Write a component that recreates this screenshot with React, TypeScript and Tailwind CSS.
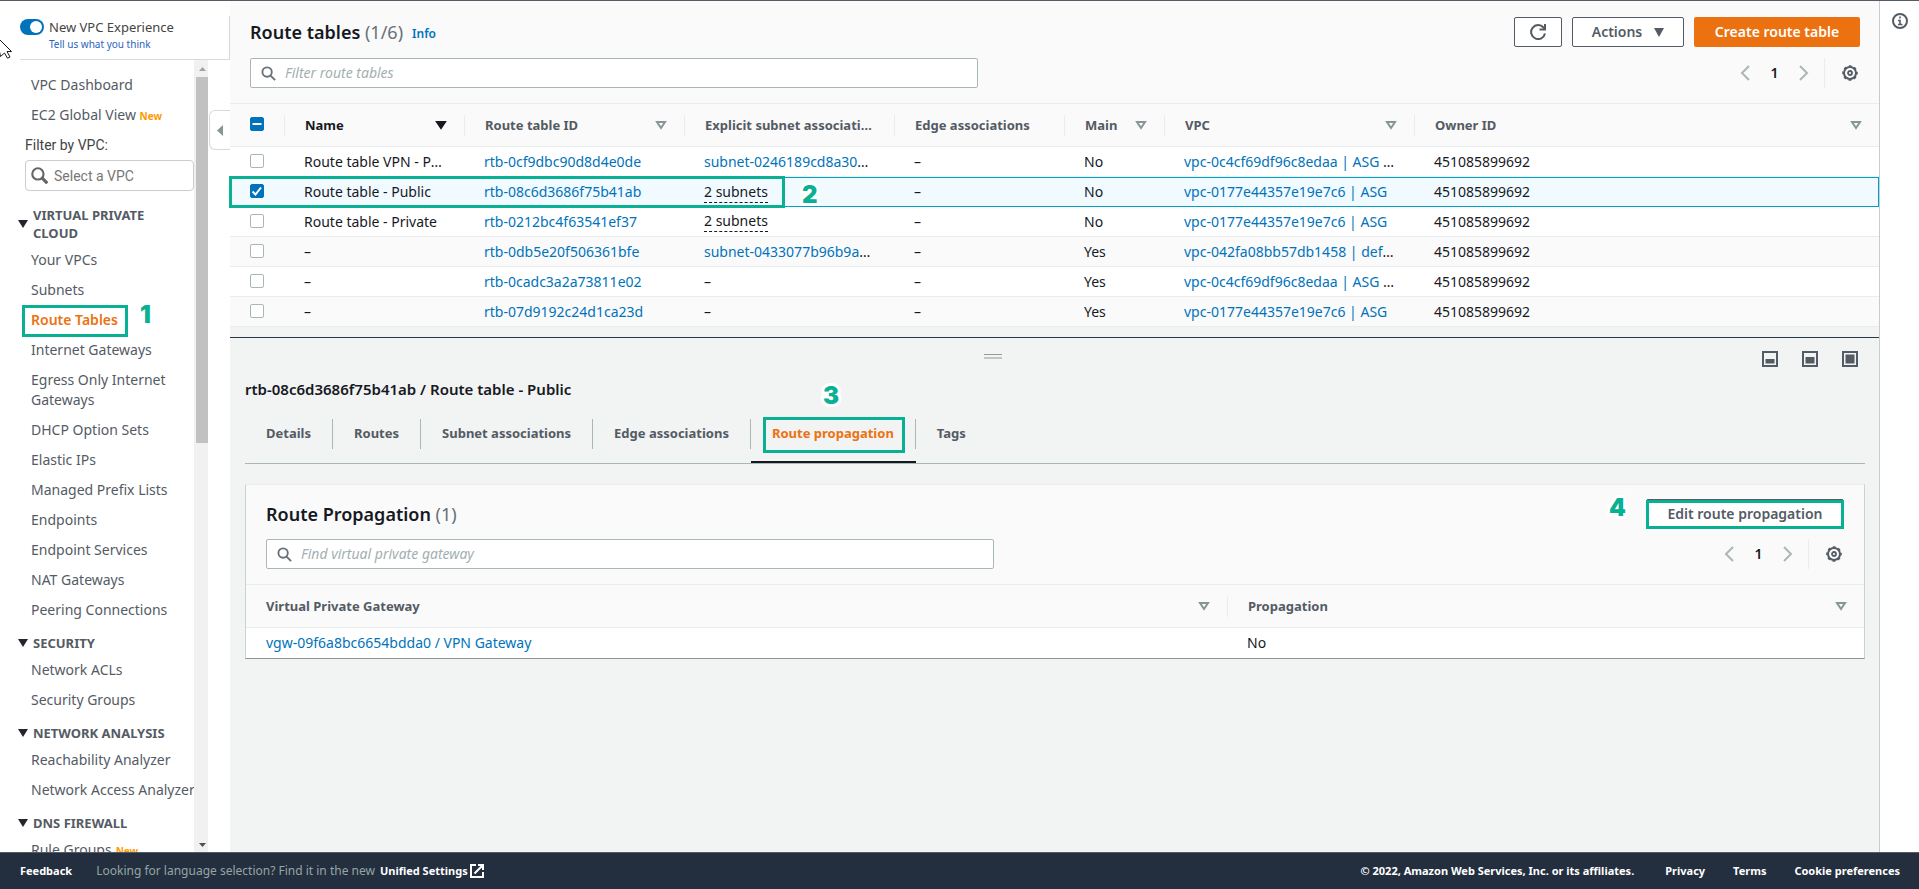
import * as React from "react"

const GREEN_BOX = "pointer-events-none absolute border-3 border-[#09b093]"

interface RouteTable {
    name: string
    id: string
    subnet: string
    main: string
    vpc: string
}

const routeTables: RouteTable[] = [
    { name: "Route table VPN - Private", id: "rtb-0cf9dbc90d8d4e0de", subnet: "subnet-0246189cd8a30b1f2", main: "No", vpc: "vpc-0c4cf69df96c8edaa | ASG VPN" },
    { name: "Route table - Public", id: "rtb-08c6d3686f75b41ab", subnet: "2 subnets", main: "No", vpc: "vpc-0177e44357e19e7c6 | ASG" },
    { name: "Route table - Private", id: "rtb-0212bc4f63541ef37", subnet: "2 subnets", main: "No", vpc: "vpc-0177e44357e19e7c6 | ASG" },
    { name: "–", id: "rtb-0db5e20f506361bfe", subnet: "subnet-0433077b96b9a41c7", main: "Yes", vpc: "vpc-042fa08bb57db1458 | default" },
    { name: "–", id: "rtb-0cadc3a2a73811e02", subnet: "–", main: "Yes", vpc: "vpc-0c4cf69df96c8edaa | ASG VPN" },
    { name: "–", id: "rtb-07d9192c24d1ca23d", subnet: "–", main: "Yes", vpc: "vpc-0177e44357e19e7c6 | ASG" },
]

const sections = [
    {
        title: "VIRTUAL PRIVATE CLOUD",
        items: [
            "Your VPCs",
            "Subnets",
            "Route Tables",
            "Internet Gateways",
            "Egress Only Internet Gateways",
            "DHCP Option Sets",
            "Elastic IPs",
            "Managed Prefix Lists",
            "Endpoints",
            "Endpoint Services",
            "NAT Gateways",
            "Peering Connections",
        ],
    },
    { title: "SECURITY", items: ["Network ACLs", "Security Groups"] },
    { title: "NETWORK ANALYSIS", items: ["Reachability Analyzer", "Network Access Analyzer"] },
    { title: "DNS FIREWALL", items: ["Rule Groups"] },
]

const tabs = ["Details", "Routes", "Subnet associations", "Edge associations", "Route propagation", "Tags"]

function Step({ n, className }: { n: number; className: string }) {
    return (
        <span
            className={`pointer-events-none absolute font-[Inter] text-2xl leading-6 font-black text-[#09b093] [-webkit-text-stroke:6px_white] [paint-order:stroke_fill] ${className}`}
        >
            {n}
        </span>
    )
}

function SearchIcon({ className }: { className: string }) {
    return (
        <svg viewBox="0 0 16 16" className={className} fill="none" stroke="currentColor" strokeWidth="2">
            <circle cx="6.5" cy="6.5" r="5" />
            <path d="M10.2 10.2 15 15" />
        </svg>
    )
}

function SortIcon({ active = false }: { active?: boolean }) {
    return (
        <svg viewBox="0 0 12 10" className={`h-[10px] w-3 shrink-0 ${active ? "text-[#16191f]" : "text-[#879596]"}`}>
            <path
                d="M2 2h8L6 8z"
                fill={active ? "currentColor" : "none"}
                stroke="currentColor"
                strokeWidth="2"
            />
        </svg>
    )
}

function GearIcon() {
    return (
        <svg viewBox="0 0 16 16" className="size-4" fill="none" stroke="#545b64" strokeWidth="2">
            <circle cx="8" cy="8" r="6" />
            <circle cx="8" cy="8" r="7" strokeWidth="1.6" strokeDasharray="2.75 2.75" strokeDashoffset="1.4" />
            <circle cx="8" cy="8" r="2" strokeWidth="1.8" />
        </svg>
    )
}

function Pagination() {
    return (
        <div className="flex h-[30px] items-center">
            <button aria-label="Previous page" className="text-[#aab7b8]">
                <svg viewBox="0 0 10 16" className="h-4 w-[10px]" fill="none" stroke="currentColor" strokeWidth="2">
                    <path d="M9 1 2 8l7 7" />
                </svg>
            </button>
            <span className="w-[49px] text-center text-sm font-semibold">1</span>
            <button aria-label="Next page" className="text-[#aab7b8]">
                <svg viewBox="0 0 10 16" className="h-4 w-[10px]" fill="none" stroke="currentColor" strokeWidth="2">
                    <path d="m1 1 7 7-7 7" />
                </svg>
            </button>
            <span className="mr-[17px] ml-[15px] h-full border-l border-[#eaeded]" />
            <button aria-label="Preferences" className="mr-[2px]">
                <GearIcon />
            </button>
        </div>
    )
}

function SearchBox({ placeholder }: { placeholder: string }) {
    return (
        <label className="flex h-[30px] w-[728px] items-center rounded-[2px] border border-[#aab7b8] bg-white pl-[10px]">
            <SearchIcon className="size-[15px] text-[#687078]" />
            <input
                aria-label={placeholder}
                placeholder={placeholder}
                className="ml-[9px] min-w-0 flex-1 text-sm outline-none placeholder:text-[#a3afb0] placeholder:italic"
            />
        </label>
    )
}

function Checkbox({ label, checked = false, mixed = false }: { label: string; checked?: boolean; mixed?: boolean }) {
    return (
        <span className="relative mb-[2px] block size-[14px]">
            <input
                type="checkbox"
                aria-label={label}
                defaultChecked={checked || mixed}
                className="block size-[14px] appearance-none rounded-[2px] border border-[#aab7b8] bg-white checked:border-[#0073bb] checked:bg-[#0073bb]"
            />
            {(checked || mixed) && (
                <svg viewBox="0 0 14 14" className="pointer-events-none absolute inset-0 size-[14px]" fill="none" stroke="white" strokeWidth="2">
                    <path d={mixed ? "M2.5 7h9" : "m2.5 7.5 3 3 5.5-7"} />
                </svg>
            )}
        </span>
    )
}

function HeaderCell({ label, sort = false, active = false, last = false }: { label: string; sort?: boolean; active?: boolean; last?: boolean }) {
    return (
        <th className="h-[43px] border-b border-[#eaeded] bg-[#fafafa] p-0 text-left">
            <div className={`flex h-[21px] items-center pl-5 ${last ? "" : "border-r border-[#eaeded]"} ${sort ? "pr-[17px]" : "pr-5"}`}>
                <span className={`min-w-0 flex-1 truncate text-[13px] font-bold ${active ? "text-[#16191f]" : "text-[#545b64]"}`}>{label}</span>
                {sort && <SortIcon active={active} />}
            </div>
        </th>
    )
}

function Sidebar() {
    return (
        <aside className="relative flex w-[230px] shrink-0 flex-col text-[#545b64]">
            <div className="mt-[15px] ml-5 flex h-11 border-r border-b border-[#d5dbdb]">
                <label className="relative mt-[3px] h-4 w-6 shrink-0">
                    <input type="checkbox" defaultChecked aria-label="New VPC Experience" className="block h-4 w-6 appearance-none rounded-full bg-[#0073bb]" />
                    <span className="absolute top-[2px] right-[2px] size-3 rounded-full bg-white" />
                </label>
                <div className="ml-[5px]">
                    <div className="mt-[2px] text-[13px] leading-[18px] text-[#444]">New VPC Experience</div>
                    <a href="#feedback" className="block text-[10px] leading-4 text-[#2b62c4]">Tell us what you think</a>
                </div>
            </div>
            <div className="flex min-h-0 flex-1">
                <nav className="flex w-[194px] flex-col overflow-hidden pt-[10px] text-sm leading-5">
                    <a href="#dashboard" className="py-[5px] pl-[31px]">VPC Dashboard</a>
                    <a href="#global" className="py-[5px] pl-[31px] whitespace-nowrap">
                        EC2 Global View <span className="text-[10px] font-bold text-[#ff9900]">New</span>
                    </a>
                    <label htmlFor="vpc-filter" className="py-1 pl-[25px] font-[Roboto] text-[#444]">Filter by VPC:</label>
                    <div className="mt-px ml-[25px] flex h-[31px] shrink-0 items-center rounded-[4px] border border-[#ccc] bg-white pl-[5px] text-[#666]">
                        <svg viewBox="0 0 16 16" className="size-[17px] shrink-0" fill="none" stroke="currentColor">
                            <circle cx="6.5" cy="6.5" r="5.3" strokeWidth="2" />
                            <path d="m10.3 10.3 5 5" strokeWidth="3" />
                        </svg>
                        <input id="vpc-filter" placeholder="Select a VPC" className="ml-[6px] w-full min-w-0 font-[Roboto] text-sm outline-none placeholder:text-[#777]" />
                    </div>
                    <div className="h-[6px] shrink-0" />
                    {sections.map((section) => (
                        <div key={section.title}>
                            <button className="flex w-full items-center pt-[9px] pb-[3px] pl-[18px] text-left text-[13px] leading-[18px] font-bold">
                                <svg viewBox="0 0 10 8" className="mr-[5px] h-2 w-[10px] shrink-0" fill="#21252c">
                                    <path d="M0 0h10L5 8z" />
                                </svg>
                                <span className="w-[150px]">{section.title}</span>
                            </button>
                            {section.items.map((item) => (
                                <a
                                    key={item}
                                    href="#nav"
                                    className={`relative block py-[5px] pl-[31px] ${item.length > 25 ? "" : "whitespace-nowrap"} ${item === "Route Tables" ? "font-semibold text-[#ec7211]" : ""}`}
                                >
                                    {item}
                                    {item === "Rule Groups" && <span className="ml-1 text-[10px] font-bold text-[#ff9900]">New</span>}
                                    {item === "Route Tables" && (
                                        <>
                                            <span className={`${GREEN_BOX} top-0 left-[22px] h-8 w-[106px]`} />
                                            <Step n={1} className="-top-[2px] left-[140px]" />
                                        </>
                                    )}
                                </a>
                            ))}
                        </div>
                    ))}
                </nav>
                <div className="flex w-[14px] flex-col items-end bg-[#f1f1f1]">
                    <svg viewBox="0 0 14 17" className="h-[17px] w-[14px]" fill="#a3a3a3">
                        <path d="M5 11h7L8.5 7z" />
                    </svg>
                    <div className="h-[366px] w-3 bg-[#c1c1c1]" />
                    <svg viewBox="0 0 14 17" className="mt-auto h-[17px] w-[14px]" fill="#505050">
                        <path d="M5 8h7l-3.5 4z" />
                    </svg>
                </div>
            </div>
            <button aria-label="Collapse navigation" className="absolute top-[109px] right-0 flex h-10 w-[21px] items-center justify-center rounded-l-md border border-r-0 border-[#d5dbdb] bg-white">
                <svg viewBox="0 0 6 11" className="h-[11px] w-[6px]" fill="#879596">
                    <path d="M6 0v11L0 5.5z" />
                </svg>
            </button>
            <svg viewBox="0 0 12 20" className="absolute top-[38px] left-0 h-5 w-3" fill="white" stroke="#16191f">
                <path d="M-3.5-2.500 11.500 12.500H7L10 18l-2.500 1.200L4.500 14 .5 17.500z" />
            </svg>
        </aside>
    )
}

function RouteTablesPanel() {
    return (
        <section className="bg-[#fafafa]">
            <div className="pt-4 pr-[19px] pb-[15px] pl-5">
                <div className="flex h-[30px] items-center">
                    <h1 className="text-lg font-semibold">
                        Route tables <span className="font-normal text-[#687078]">(1/6)</span>
                    </h1>
                    <a href="#info" className="mt-1 ml-[9px] text-xs font-semibold text-[#0073bb]">Info</a>
                    <div className="ml-auto flex gap-[10px] text-sm font-semibold text-[#545b64]">
                        <button aria-label="Refresh" className="flex h-[30px] w-12 items-center justify-center rounded-[2px] border border-[#545b64] bg-white">
                            <svg viewBox="0 0 16 16" className="size-4" fill="none" stroke="currentColor" strokeWidth="2">
                                <path d="M15 9.5A7 7 0 1 1 13.5 3.5L15 5.5" />
                                <path d="M15 0v5.5H9.5" />
                            </svg>
                        </button>
                        <button className="flex h-[30px] w-28 items-center justify-center gap-3 rounded-[2px] border border-[#545b64] bg-white">
                            Actions
                            <svg viewBox="0 0 10 9" className="h-[9px] w-[10px]" fill="currentColor">
                                <path d="M0 0h10L5 9z" />
                            </svg>
                        </button>
                        <button className="h-[30px] w-[166px] rounded-[2px] bg-[#ec7211] text-white">Create route table</button>
                    </div>
                </div>
                <div className="mt-[11px] flex justify-between">
                    <SearchBox placeholder="Filter route tables" />
                    <Pagination />
                </div>
            </div>
            <div className="relative border-t border-[#eaeded]">
                <table className="w-full table-fixed border-separate border-spacing-0 text-sm leading-5">
                    <colgroup>
                        <col className="w-[55px]" />
                        <col className="w-[180px]" />
                        <col className="w-[220px]" />
                        <col className="w-[210px]" />
                        <col className="w-[170px]" />
                        <col className="w-[100px]" />
                        <col className="w-[250px]" />
                        <col />
                    </colgroup>
                    <thead>
                        <tr>
                            <th className="border-b border-[#eaeded] p-0">
                                <div className="flex h-[21px] items-center border-r border-[#eaeded] pl-5">
                                    <Checkbox label="Select all" mixed />
                                </div>
                            </th>
                            <HeaderCell label="Name" sort active />
                            <HeaderCell label="Route table ID" sort />
                            <HeaderCell label="Explicit subnet associations" />
                            <HeaderCell label="Edge associations" />
                            <HeaderCell label="Main" sort />
                            <HeaderCell label="VPC" sort />
                            <HeaderCell label="Owner ID" sort last />
                        </tr>
                    </thead>
                    <tbody>
                        {routeTables.map((row, i) => {
                            const selected = i === 1
                            const cell = `h-[30px] truncate py-0 pr-5 ${
                                selected ? "border-y border-[#00a1c9] bg-[#f1faff]" : i > 2 && i % 2 ? "border-b border-[#eaeded]" : "border-b border-[#eaeded] bg-white"
                            }`
                            return (
                                <tr key={row.id}>
                                    <td className={`${cell} pl-5`}>
                                        <Checkbox label={`Select ${row.id}`} checked={selected} />
                                    </td>
                                    <td className={`${cell} pl-[19px]`}>{row.name}</td>
                                    <td className={`${cell} pl-[19px]`}>
                                        <a href="#rtb" className="text-[#0073bb]">{row.id}</a>
                                    </td>
                                    <td className={`${cell} pl-[19px]`}>
                                        {row.subnet.startsWith("subnet") ? (
                                            <a href="#subnet" className="text-[#0073bb]">{row.subnet}</a>
                                        ) : row.subnet === "–" ? (
                                            "–"
                                        ) : (
                                            <button className="border-b border-dashed border-[#16191f]">{row.subnet}</button>
                                        )}
                                    </td>
                                    <td className={`${cell} pl-[19px]`}>–</td>
                                    <td className={`${cell} pl-[19px]`}>{row.main}</td>
                                    <td className={`${cell} pl-[19px]`}>
                                        <a href="#vpc" className="text-[#0073bb]">{row.vpc}</a>
                                    </td>
                                    <td className={`${cell} pl-[19px] ${selected ? "border-r" : ""}`}>451085899692</td>
                                </tr>
                            )
                        })}
                    </tbody>
                </table>
                <span className={`${GREEN_BOX} top-[72px] -left-px h-8 w-[556px]`} />
                <Step n={2} className="top-[79px] left-[572px]" />
            </div>
        </section>
    )
}

function LayoutIcon({ y }: { y: number }) {
    return (
        <svg viewBox="0 0 16 16" className="size-4">
            <rect x="1" y="1" width="14" height="14" fill="none" stroke="#545b64" strokeWidth="2" />
            <rect x="3.5" y={y} width="9" height={12.5 - y} fill="#545b64" />
        </svg>
    )
}

function DetailPanel() {
    return (
        <section className="mt-[10px] border-t border-[#2a3744]">
            <div className="flex h-[29px] items-end pr-[21px]">
                <div className="flex h-4 flex-1 justify-center pt-[3px]">
                    <div className="h-[5px] w-[18px] border-t border-b-2 border-t-[#999] border-b-[#c4c6c6]" />
                </div>
                <div className="ml-[6px] flex gap-6">
                    {[8, 6, 3.5].map((y) => (
                        <button key={y} aria-label="Panel size">
                            <LayoutIcon y={y} />
                        </button>
                    ))}
                </div>
            </div>
            <div className="pr-[14px] pl-[15px]">
                <h2 className="mt-[10px] text-[15px] leading-6 font-semibold">rtb-08c6d3686f75b41ab / Route table - Public</h2>
                <div role="tablist" className="mt-[18px] flex border-b border-[#aab7b8] text-[13px] font-bold text-[#545b64]">
                    {tabs.map((tab) => {
                        const active = tab === "Route propagation"
                        return (
                            <div key={tab} className={`relative border-b-2 pb-3 ${active ? "border-[#16191f]" : "border-transparent"}`}>
                                <button
                                    role="tab"
                                    aria-selected={active}
                                    className={`h-[30px] px-[21px] ${tab === "Tags" ? "" : "border-r border-[#aab7b8]"} ${active ? "text-[#ec7211]" : ""}`}
                                >
                                    {tab}
                                </button>
                                {active && (
                                    <>
                                        <span className={`${GREEN_BOX} -top-[2px] right-[11px] left-3 h-9`} />
                                        <Step n={3} className="-top-[35px] left-[72px]" />
                                    </>
                                )}
                            </div>
                        )
                    })}
                </div>
                <div className="mt-5 border border-t-[#eaeded] border-r-[#ccd1d1] border-b-[#879596] border-l-[#ccd1d1] bg-[#fafafa]">
                    <div className="px-5 pt-[14px] pb-[15px]">
                        <div className="flex h-[30px] items-center justify-between">
                            <h3 className="text-lg font-semibold">
                                Route Propagation <span className="font-normal text-[#687078]">(1)</span>
                            </h3>
                            <div className="relative">
                                <button className="h-[30px] w-[198px] rounded-[2px] border border-[#545b64] bg-white text-sm font-semibold text-[#545b64]">
                                    Edit route propagation
                                </button>
                                <span className={`${GREEN_BOX} inset-x-0 top-px bottom-0`} />
                                <Step n={4} className="-top-[3px] -left-[37px]" />
                            </div>
                        </div>
                        <div className="mt-[10px] flex justify-between">
                            <SearchBox placeholder="Find virtual private gateway" />
                            <Pagination />
                        </div>
                    </div>
                    <table className="w-full table-fixed border-separate border-spacing-0 border-t border-[#eaeded] text-sm leading-5">
                        <colgroup>
                            <col className="w-[982px]" />
                            <col />
                        </colgroup>
                        <thead>
                            <tr>
                                <HeaderCell label="Virtual Private Gateway" sort />
                                <HeaderCell label="Propagation" sort last />
                            </tr>
                        </thead>
                        <tbody>
                            <tr>
                                <td className="h-[30px] bg-white px-5 py-0">
                                    <a href="#vgw" className="text-[#0073bb]">vgw-09f6a8bc6654bdda0 / VPN Gateway</a>
                                </td>
                                <td className="bg-white py-0 pr-5 pl-[19px]">No</td>
                            </tr>
                        </tbody>
                    </table>
                </div>
            </div>
        </section>
    )
}

function Footer() {
    return (
        <footer className="flex h-[37px] shrink-0 items-center border-t border-[#545b64] bg-[#232f3e] pr-[19px] pl-5 text-[11px] font-bold text-white">
            <button>Feedback</button>
            <span className="ml-6 text-xs font-normal text-[#95a5a6]">Looking for language selection? Find it in the new</span>
            <a href="#settings" className="ml-[5px] flex items-center gap-[2px]">
                Unified Settings
                <svg viewBox="0 0 14 14" className="size-[14px]" fill="none" stroke="currentColor" strokeWidth="2">
                    <path d="M6 1H1v12h12V8M8 1h5v5M13 1 4.5 9.5" />
                </svg>
            </a>
            <div className="ml-auto flex gap-7">
                <span className="mr-[3px]">© 2022, Amazon Web Services, Inc. or its affiliates.</span>
                <a href="#privacy">Privacy</a>
                <a href="#terms">Terms</a>
                <a href="#cookies">Cookie preferences</a>
            </div>
        </footer>
    )
}

export default function App() {
    return (
        <div className="flex h-screen flex-col overflow-hidden border-t border-[#545b64] bg-white font-['Noto_Sans',sans-serif] text-[#16191f]">
            <div className="flex min-h-0 flex-1">
                <Sidebar />
                <main className="min-w-0 flex-1 border-r border-[#c8cccc] bg-[#f2f3f3]">
                    <RouteTablesPanel />
                    <DetailPanel />
                </main>
                <aside className="flex w-[39px] shrink-0 justify-center pt-3">
                    <button aria-label="Open info panel" className="size-4">
                        <svg viewBox="0 0 16 16" className="size-4" fill="none" stroke="#545b64" strokeWidth="2">
                            <circle cx="8" cy="8" r="7" />
                            <path d="M8 3.5v2M6 7.5h2V11M6 11.5h4.5" strokeWidth="1.6" />
                        </svg>
                    </button>
                </aside>
            </div>
            <Footer />
        </div>
    )
}
